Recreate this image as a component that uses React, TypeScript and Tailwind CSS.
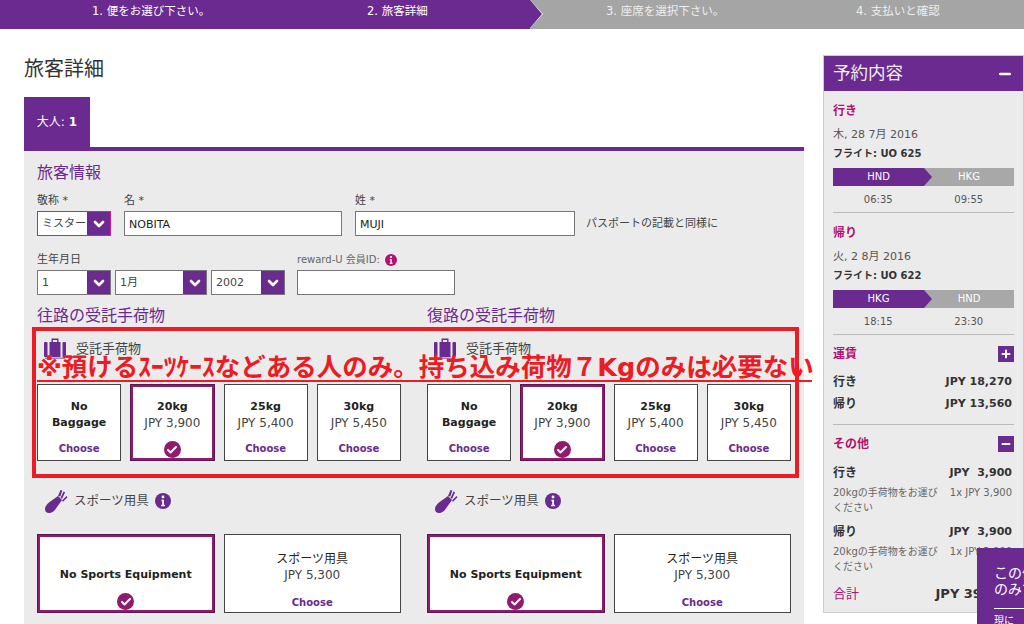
import { Check, ChevronDown, Minus, Plus } from "lucide-react";

const font = { sans: "font-['Tahoma','DejaVu_Sans','Noto_Sans','Noto_Sans_CJK_JP',sans-serif]" };

function Info({ color = "text-[#6a2a90]", size = 14 }: { color?: string; size?: number }) {
    return (
        <svg viewBox="0 0 16 16" width={size} height={size} className={color}>
            <circle cx="8" cy="8" r="8" fill="currentColor" />
            <circle cx="8" cy="4" r="1.4" fill="#fff" />
            <path d="M6.400 6.800h2.600v5h1v1.400H6.200v-1.400h1v-3.600h-.8z" fill="#fff" />
        </svg>
    );
}

function Suitcase() {
    return (
        <svg viewBox="0 0 24 24" width="24" height="24" className="text-[#6a2a90]">
            <path d="M8.500 5V1.500h7V5h-1.400V2.900H9.900V5z" fill="currentColor" />
            <rect x="6.500" y="5" width="11" height="15" fill="currentColor" />
            <rect x="1" y="5" width="3.500" height="15" rx="1" fill="currentColor" />
            <rect x="19.500" y="5" width="3.500" height="15" rx="1" fill="currentColor" />
            <rect x="2" y="20.500" width="20" height="1.400" fill="currentColor" opacity="0.6" />
        </svg>
    );
}

function GolfBag() {
    return (
        <svg viewBox="0 0 24 26" width="24" height="26" className="text-[#6a2a90]">
            <path d="M1 21c0-3 3-6 6-8l7-5 4 4-5 7c-2 3-4 6-8 6-2.500 0-4-1.500-4-4z" fill="currentColor" />
            <path d="M14 8l2.500-6 1.800.6-2 6zM16.500 10l3-6.500 1.600.8-3 6.500zM18 12.500l4.500-4.500 1 1.200-4.500 4.500z" fill="currentColor" />
        </svg>
    );
}

function Tick() {
    return (
        <span className="flex h-[17px] w-[17px] items-center justify-center rounded-full bg-[#8f1a6e]">
            <Check className="h-3 w-3 text-white" strokeWidth={4} />
        </span>
    );
}

function Select({ value, width, pink = false }: { value: string; width: string; pink?: boolean }) {
    return (
        <div className={`flex h-[25px] ${width} border ${pink ? "border-[#d81b8c]" : "border-[#777]"} bg-white`}>
            <span className="flex-1 whitespace-nowrap pl-[4px] text-[11px] leading-[23px] text-[#444]">{value}</span>
            <span className="flex w-[23px] items-center justify-center bg-[#6a2a90]">
                <ChevronDown className="h-4 w-4 text-white" strokeWidth={4} />
            </span>
        </div>
    );
}

function Input({ value = "", width }: { value?: string; width: string }) {
    return (
        <div className={`h-[25px] ${width} border border-[#777] bg-white pl-[4px] text-[11px] leading-[25px] text-[#222]`}>{value}</div>
    );
}

const selectedCard = "border border-[#5b1650] shadow-[inset_0_0_0_2px_#8f1a6e]";

function BagCard({ title, price, selected }: { title: string; price?: string; selected?: boolean }) {
    return (
        <div className={`flex h-[77px] flex-col items-center bg-white text-center ${selected ? selectedCard : "border border-[#444]"}`}>
            <div className="flex h-[56px] flex-col justify-center px-[8px] pt-[3px] leading-[16px]">
                <b className="text-[11px] font-bold text-[#222]">{title}</b>
                {price && <span className="text-[12px] text-[#444]">{price}</span>}
            </div>
            {selected ? <Tick /> : <span className="mt-[1px] text-[10px] font-bold leading-[14px] text-[#6a2a90]">Choose</span>}
        </div>
    );
}

function SportCard({ title, price, selected }: { title: string; price?: string; selected?: boolean }) {
    return (
        <div className={`flex h-[79px] flex-col items-center bg-white text-center ${selected ? selectedCard : "border border-[#444]"}`}>
            <div className={`flex h-[58px] flex-col justify-center leading-[16px] ${selected ? "pt-[22px]" : "pt-[6px]"}`}>
                <span className={selected ? "text-[11px] font-bold text-[#222]" : "text-[12px] text-[#222]"}>{title}</span>
                {price && <span className="text-[12px] text-[#444]">{price}</span>}
            </div>
            {selected ? <Tick /> : <span className="mt-[2px] text-[10px] font-bold text-[#6a2a90]">Choose</span>}
        </div>
    );
}

function BaggageColumn({ heading }: { heading: string }) {
    return (
        <div>
            <h3 className="text-[16px] leading-[20px] text-[#6a2a90]">{heading}</h3>
            <div className="mt-[11px] flex h-[24px] items-center gap-[9px] pl-[6px] text-[13px] text-[#444]">
                <Suitcase />
                <span>受託手荷物</span>
            </div>
            <div className="mt-[23px] grid grid-cols-4 gap-[9px]">
                <BagCard title="No Baggage" />
                <BagCard title="20kg" price="JPY 3,900" selected />
                <BagCard title="25kg" price="JPY 5,400" />
                <BagCard title="30kg" price="JPY 5,450" />
            </div>
            <div className="mt-[27px] flex h-[26px] items-center gap-[6px] pl-[7px] text-[12.500px] text-[#444]">
                <GolfBag />
                <span>スポーツ用具</span>
                <Info size={16} />
            </div>
            <div className="mt-[20px] grid grid-cols-2 gap-[9px]">
                <SportCard title="No Sports Equipment" selected />
                <SportCard title="スポーツ用具" price="JPY 5,300" />
            </div>
        </div>
    );
}

function Leg({ heading, date, flight, from, to, dep, arr }: { heading: string; date: string; flight: string; from: string; to: string; dep: string; arr: string }) {
    return (
        <div className="h-[122px] border-b border-[#bbb]">
            <h4 className="pt-[11px] text-[12px] font-bold leading-[18px] text-[#b0126f]">{heading}</h4>
            <p className="mt-[7px] text-[11px] leading-[16px] text-[#555]">{date}</p>
            <p className="mt-[3px] text-[10px] font-bold leading-[16px] text-[#333]">{flight}</p>
            <div className="relative mt-[6px] flex h-[18px] bg-[#a8a8a8] text-center text-[10px] leading-[18px] text-white">
                <span className="w-[91px] bg-[#6a2a90]">{from}</span>
                <span className="absolute left-[91px] top-0 h-0 w-0 border-y-[9px] border-l-[8px] border-y-transparent border-l-[#6a2a90]" />
                <span className="flex-1">{to}</span>
            </div>
            <div className="mt-[6px] flex text-center text-[10px] leading-[16px] text-[#555]">
                <span className="w-1/2">{dep}</span>
                <span className="w-1/2">{arr}</span>
            </div>
        </div>
    );
}

function BoxIcon({ children }: { children: React.ReactNode }) {
    return <span className="flex h-[16px] w-[16px] items-center justify-center bg-[#6a2a90]">{children}</span>;
}

function Extra({ label }: { label: string }) {
    return (
        <div>
            <div className="flex justify-between pr-[2px] text-[12px] font-bold leading-[18px] text-[#333]">
                <span>{label}</span>
                <span className="text-[11px]">JPY&nbsp; 3,900</span>
            </div>
            <div className="mt-[3px] flex justify-between pr-[2px] text-[10px] leading-[15px] text-[#666]">
                <span>20kgの手荷物をお運び<br />ください</span>
                <span>1x JPY 3,900</span>
            </div>
        </div>
    );
}

export default function App() {
    return (
        <div className={`relative h-[624px] w-[1024px] overflow-hidden bg-white ${font.sans}`}>
            <div className="flex h-[29px] bg-[#a5a5a5] text-[11.500px] leading-[23px] text-white">
                <div className="relative w-[530px] bg-[#6a2a90]">
                    <span className="absolute left-[92px] top-0">1. 便をお選び下さい。</span>
                    <span className="absolute left-[367px] top-0">2. 旅客詳細</span>
                    <span className="absolute -right-[13px] top-0 h-0 w-0 border-y-[14.500px] border-l-[13px] border-y-transparent border-l-white" />
                    <span className="absolute -right-[12px] top-0 h-0 w-0 border-y-[14.500px] border-l-[12px] border-y-transparent border-l-[#6a2a90]" />
                </div>
                <span className="ml-[76px] w-[250px] text-[#eee]">3. 座席を選択下さい。</span>
                <span className="text-[#eee]">4. 支払いと確認</span>
            </div>

            <div className="flex items-start pl-[24px]">
                <main className="w-[780px]">
                    <h1 className="mt-[27px] text-[20px] leading-[26px] text-[#333]">旅客詳細</h1>
                    <div className="mt-[15px] flex h-[50px] w-[66px] items-center justify-center bg-[#6a2a90] text-[12px] text-white">大人: <b className="ml-1">1</b></div>
                    <div className="h-[625px] border-t-[4px] border-[#6a2a90] bg-[#ebebeb] px-[13px] pt-[12px]">
                        <h2 className="text-[16px] leading-[20px] text-[#6a2a90]">旅客情報</h2>
                        <div className="mt-[10px] flex items-end gap-[13px] text-[11px] leading-[16px] text-[#444]">
                            <div>
                                <label className="mb-[2px] block">敬称 *</label>
                                <Select value="ミスター" width="w-[74px]" pink />
                            </div>
                            <div>
                                <label className="mb-[2px] block">名 *</label>
                                <Input value="NOBITA" width="w-[218px]" />
                            </div>
                            <div>
                                <label className="mb-[2px] block">姓 *</label>
                                <Input value="MUJI" width="w-[220px]" />
                            </div>
                            <span className="ml-[-2px] pb-[4px] text-[11px] text-[#444]">パスポートの記載と同様に</span>
                        </div>
                        <div className="mt-[16px] flex items-end gap-[4px] text-[11px] leading-[16px] text-[#444]">
                            <div>
                                <label className="mb-[2px] block">生年月日</label>
                                <Select value="1" width="w-[74px]" />
                            </div>
                            <Select value="1月" width="w-[92px]" />
                            <Select value="2002" width="w-[74px]" />
                            <div className="ml-[8px]">
                                <label className="mb-[2px] flex items-center gap-[5px] text-[10px] text-[#666]">reward-U 会員ID: <Info color="text-[#b0126f]" size={12} /></label>
                                <Input width="w-[158px]" />
                            </div>
                        </div>
                        <div className="mt-[11px] grid w-[754px] grid-cols-2 gap-[26px]">
                            <BaggageColumn heading="往路の受託手荷物" />
                            <BaggageColumn heading="復路の受託手荷物" />
                        </div>
                    </div>
                </main>

                <aside className="ml-[19px] mt-[26px] h-[558px] w-[201px] border border-[#ccc] bg-[#ebebeb]">
                    <div className="flex h-[35px] items-center justify-between bg-[#6a2a90] pl-[9px] pr-[10px] text-[17.500px] text-[#eee]">
                        <span>予約内容</span>
                        <Minus className="h-4 w-4 text-white" strokeWidth={4} />
                    </div>
                    <div className="px-[9px]">
                        <Leg heading="行き" date="木, 28 7月 2016" flight="フライト: UO 625" from="HND" to="HKG" dep="06:35" arr="09:55" />
                        <Leg heading="帰り" date="火, 2 8月 2016" flight="フライト: UO 622" from="HKG" to="HND" dep="18:15" arr="23:30" />
                        <div className="h-[90px] border-b border-[#bbb]">
                            <div className="flex items-center justify-between pt-[10px] text-[12px] font-bold text-[#b0126f]">
                                <span>運賃</span>
                                <BoxIcon><Plus className="h-3 w-3 text-white" strokeWidth={4} /></BoxIcon>
                            </div>
                            <div className="mt-[8px] flex items-center justify-between pr-[2px] text-[12px] font-bold leading-[22px] text-[#333]"><span>行き</span><span className="text-[11px]">JPY 18,270</span></div>
                            <div className="flex items-center justify-between pr-[2px] text-[12px] font-bold leading-[22px] text-[#333]"><span>帰り</span><span className="text-[11px]">JPY 13,560</span></div>
                        </div>
                        <div className="flex items-center justify-between pt-[10px] text-[12px] font-bold text-[#b0126f]">
                            <span>その他</span>
                            <BoxIcon><Minus className="h-3 w-3 text-white" strokeWidth={4} /></BoxIcon>
                        </div>
                        <div className="mt-[11px] space-y-[8px]">
                            <Extra label="行き" />
                            <Extra label="帰り" />
                        </div>
                        <div className="mt-[10px] flex justify-between text-[13px] text-[#b0126f]">
                            <span>合計</span>
                            <b className="text-[#333]">JPY 39,630</b>
                        </div>
                    </div>
                </aside>
            </div>

            <div className="absolute left-[977px] top-[548px] h-[76px] w-[47px] overflow-hidden bg-[#6a2a90] pl-[17px] pt-[17px] text-white">
                <p className="w-[200px] text-[14px] leading-[16px]">この便<br />のみで</p>
                <div className="mt-[11px] border-t border-white" />
                <p className="mt-[4px] w-[100px] text-[10px]">現に</p>
            </div>

            {/* red annotation drawn over the page */}
            <div className="absolute left-[32px] top-[327px] h-[151px] w-[767px] border-[4px] border-[#ed1c24]" />
            <div className="absolute left-[37px] top-[355px] h-[27px] w-[775px] whitespace-nowrap border-b-2 border-[#ed1c24] text-[25.500px] font-bold leading-[25px] text-[#ed1c24]">
                ※預けるｽｰﾂｹｰｽなどある人のみ。持ち込み荷物７Kgのみは必要ない
            </div>
        </div>
    );
}
